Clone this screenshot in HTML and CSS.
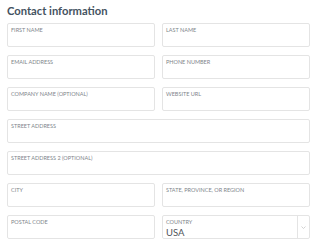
FILE: index.html
```html
<!DOCTYPE html>
<html>
<head>
<meta charset="utf-8">
<link rel="stylesheet" href="styles.css">
</head>
<body>
<form class="contact">
  <h2 class="title">Contact information</h2>
  <div class="grid">
    <label class="field"><span class="lbl">First name</span><input class="inp" type="text"></label>
    <label class="field"><span class="lbl">Last name</span><input class="inp" type="text"></label>
    <label class="field"><span class="lbl">Email address</span><input class="inp" type="text"></label>
    <label class="field"><span class="lbl">Phone number</span><input class="inp" type="text"></label>
    <label class="field"><span class="lbl">Company name (optional)</span><input class="inp" type="text"></label>
    <label class="field"><span class="lbl">Website URL</span><input class="inp" type="text"></label>
    <label class="field wide"><span class="lbl">Street address</span><input class="inp" type="text"></label>
    <label class="field wide"><span class="lbl">Street address 2 (optional)</span><input class="inp" type="text"></label>
    <label class="field"><span class="lbl">City</span><input class="inp" type="text"></label>
    <label class="field"><span class="lbl">State, province, or region</span><input class="inp" type="text"></label>
    <label class="field"><span class="lbl">Postal code</span><input class="inp" type="text"></label>
    <div class="field select">
      <div class="sel-main"><span class="lbl">Country</span><span class="value">USA</span></div>
      <div class="sel-arrow"><svg width="5" height="3" viewBox="0 0 5 3"><path d="M0.5 0.5 L2.5 2.5 L4.5 0.5" fill="none" stroke="#c8c8c8" stroke-width="0.8"/></svg></div>
    </div>
  </div>
</form>
</body>
</html>
```
FILE: styles.css
```css
* { box-sizing: border-box; }
html, body { margin: 0; padding: 0; background: #fff; }
body { font-family: Lato, "Open Sans", sans-serif; }
.contact { padding: 3px 10px 0 7px; width: 320px; }
.title {
  margin: 0 0 4px 0;
  font-size: 11.2px;
  font-weight: 700;
  color: #44525f;
  line-height: 16px;
}
.grid {
  display: grid;
  grid-template-columns: 1fr 1fr;
  column-gap: 7px;
  row-gap: 8px;
}
.field {
  display: flex;
  flex-direction: column;
  height: 24px;
  border: 1px solid #e4e4e4;
  border-radius: 2px;
  padding: 3px 3px 0 3px;
  background: #fff;
}
.wide { grid-column: span 2; }
.lbl {
  font-size: 5.5px;
  line-height: 7px;
  text-transform: uppercase;
  color: #80858b;
  letter-spacing: 0;
}
.inp {
  border: 0;
  outline: none;
  padding: 0;
  margin: 0;
  height: 12px;
  font: inherit;
  font-size: 9px;
  background: transparent;
}
.select { flex-direction: row; padding: 0; }
.sel-main {
  flex: 1;
  display: flex;
  flex-direction: column;
  padding: 3px 3px 0 3px;
  border-right: 1px solid #e4e4e4;
}
.value { font-size: 9.5px; line-height: 11px; color: #4f545a; margin-top: 1px; }
.sel-arrow { width: 11px; display: flex; align-items: center; justify-content: center; }
```
